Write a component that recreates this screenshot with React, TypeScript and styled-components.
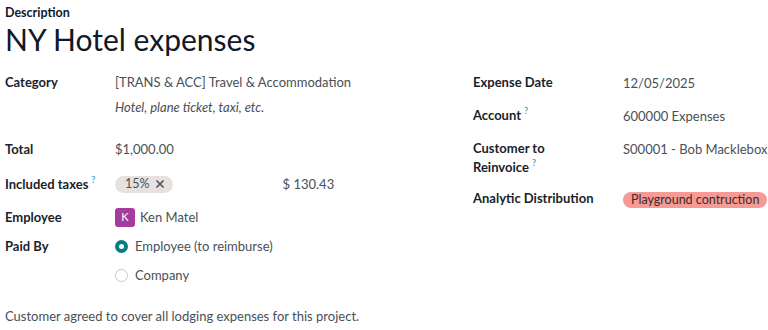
import React, { FC } from "react";
import styled, { createGlobalStyle } from "styled-components";

const GlobalStyle = createGlobalStyle`
  body {
    margin: 0;
    background: #ffffff;
    font-family: Lato, "Open Sans", sans-serif;
    font-size: 13px;
    color: #495057;
  }
`;

const App: FC = () => (
  <>
    <GlobalStyle />
    <Sheet>
      <SmallLabel>Description</SmallLabel>
      <Title>NY Hotel expenses</Title>
      <Groups>
        <Column>
          <Row>
            <Label>Category</Label>
            <Value>
              <div>[TRANS &amp; ACC] Travel &amp; Accommodation</div>
              <Hint>Hotel, plane ticket, taxi, etc.</Hint>
            </Value>
          </Row>
          <Row $space={15}>
            <Label>Total</Label>
            <Value>$1,000.00</Value>
          </Row>
          <Row>
            <Label>
              Included taxes<Help>?</Help>
            </Label>
            <TaxValue>
              <TaxPill>
                15%
                <RemoveIcon viewBox="0 0 10 10">
                  <path d="M1.5 1.5 L8.5 8.5 M8.5 1.5 L1.5 8.5" />
                </RemoveIcon>
              </TaxPill>
              <TaxAmount>$ 130.43</TaxAmount>
            </TaxValue>
          </Row>
          <Row $space={9}>
            <Label>Employee</Label>
            <Value>
              <Person>
                <Avatar>K</Avatar>
                Ken Matel
              </Person>
            </Value>
          </Row>
          <Row>
            <Label>Paid By</Label>
            <Value>
              <Choice>
                <Radio checked />
                Employee (to reimburse)
              </Choice>
              <Choice>
                <Radio />
                Company
              </Choice>
            </Value>
          </Row>
        </Column>
        <RightColumn>
          <Row>
            <RightLabel>Expense Date</RightLabel>
            <Value>12/05/2025</Value>
          </Row>
          <Row>
            <RightLabel>
              Account<Help>?</Help>
            </RightLabel>
            <Value>600000 Expenses</Value>
          </Row>
          <Row $space={12}>
            <RightLabel>
              Customer to
              <br />
              Reinvoice<Help>?</Help>
            </RightLabel>
            <Value>S00001 - Bob Macklebox</Value>
          </Row>
          <Row>
            <RightLabel>Analytic Distribution</RightLabel>
            <Value>
              <AnalyticTag>Playground contruction</AnalyticTag>
            </Value>
          </Row>
        </RightColumn>
      </Groups>
      <Note>Customer agreed to cover all lodging expenses for this project.</Note>
    </Sheet>
  </>
);

export default App;

const Sheet = styled.div`
  width: 768px;
  height: 330px;
  padding: 4px 0 0 5px;
  box-sizing: border-box;
  overflow: hidden;
`;

const SmallLabel = styled.div`
  font-weight: 700;
  font-size: 12.5px;
  line-height: 17px;
  color: #111827;
`;

const Title = styled.h1`
  margin: 0;
  font-weight: 400;
  font-size: 30px;
  line-height: 36px;
  color: #111827;
`;

const Groups = styled.div`
  display: grid;
  grid-template-columns: 468px 1fr;
  margin-top: 15px;
`;

const Column = styled.div`
  display: flex;
  flex-direction: column;
`;

const RightColumn = styled(Column)`
  padding-top: 1px;
`;

const Row = styled.div<{ $space?: number }>`
  display: flex;
  align-items: flex-start;
  margin-bottom: ${(p) => p.$space ?? 13}px;
  line-height: 20px;
`;

const Label = styled.div`
  width: 110px;
  flex: none;
  font-weight: 700;
  color: #1a1f2b;
`;

const RightLabel = styled(Label)`
  width: 150px;
  line-height: 19px;
`;

const Help = styled.sup`
  margin-left: 3px;
  font-size: 9px;
  font-weight: 700;
  color: #4aa5d1;
  vertical-align: 6px;
  line-height: 0;
`;

const Value = styled.div`
  flex: 1;
  min-width: 0;
  white-space: nowrap;
`;

const Hint = styled.div`
  margin: 5px 0 9px;
  font-style: italic;
`;

const TaxValue = styled.div`
  flex: 1;
  display: flex;
  align-items: center;
  height: 20px;
`;

const TaxPill = styled.span`
  display: inline-flex;
  align-items: center;
  gap: 5px;
  height: 17px;
  padding: 0 8px 0 10px;
  border-radius: 9px;
  background: #e7e2e0;
  color: #495057;
  font-size: 12.5px;
`;

const RemoveIcon = styled.svg`
  width: 10px;
  height: 10px;
  stroke: #4f555d;
  stroke-width: 1.7;
  fill: none;
`;

const TaxAmount = styled.span`
  margin-left: 110px;
`;

const Person = styled.div`
  display: flex;
  align-items: center;
  gap: 5px;
`;

const Avatar = styled.span`
  display: inline-flex;
  align-items: center;
  justify-content: center;
  width: 20px;
  height: 19px;
  border-radius: 3px;
  background: #a53b9e;
  color: #ffffff;
  font-size: 11px;
`;

const Choice = styled.label`
  display: flex;
  align-items: center;
  gap: 7px;
  height: 20px;
  margin-bottom: 9px;

  &:last-child {
    margin-bottom: 0;
  }
`;

const Radio = styled.span<{ checked?: boolean }>`
  box-sizing: border-box;
  width: 13px;
  height: 13px;
  border-radius: 50%;
  border: ${(p) => (p.checked ? "4px solid #017e84" : "1px solid #c3c7cc")};
  background: #ffffff;
`;

const AnalyticTag = styled.span`
  display: inline-block;
  padding: 0 8px;
  line-height: 16px;
  border-radius: 8px;
  background: #f59a94;
  color: #3d2b2b;
  font-size: 12.5px;
`;

const Note = styled.p`
  margin: 0;
  padding-top: 8px;
  line-height: 20px;
`;
